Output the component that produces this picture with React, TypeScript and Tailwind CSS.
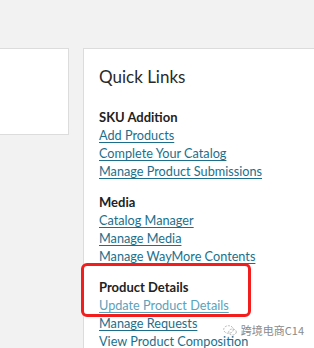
import React from 'react';

const sections = [
  {
    title: 'SKU Addition',
    links: ['Add Products', 'Complete Your Catalog', 'Manage Product Submissions'],
  },
  {
    title: 'Media',
    links: ['Catalog Manager', 'Manage Media', 'Manage WayMore Contents'],
  },
  {
    title: 'Product Details',
    links: ['Update Product Details', 'Manage Requests', 'View Product Composition'],
    highlight: true,
  },
];

function Watermark() {
  return (
    <div className="absolute right-[10px] bottom-[12px] flex items-center gap-[4px] text-[11px] leading-none text-[#8a8a8a]">
      <svg width="14" height="11" viewBox="0 0 14 11" fill="none" stroke="#b5b5b5" strokeWidth="1">
        <ellipse cx="5.5" cy="4.5" rx="4.8" ry="3.8" strokeDasharray="2 1.2" />
        <ellipse cx="9.5" cy="7" rx="3.8" ry="3" strokeDasharray="2 1.2" />
      </svg>
      <span style={{ fontFamily: '"Noto Sans CJK SC", sans-serif' }}>跨境电商C14</span>
    </div>
  );
}

export default function App() {
  return (
    <div
      className="relative w-[314px] h-[348px] overflow-hidden bg-[#f2f2f2] flex items-start gap-[14px] pt-[48px]"
      style={{ fontFamily: 'Lato, "Liberation Sans", sans-serif' }}
    >
      <div className="w-[69px] h-[87px] shrink-0 bg-white border border-l-0 border-[#dcdcdc]" />
      <div className="w-[260px] shrink-0 h-[320px] bg-white border border-r-0 border-[#dcdcdc] pl-[15px] pt-[16px]">
        <h2 className="text-[17px] leading-[24px] text-[#2a2a2a] font-normal">Quick Links</h2>
        <div className="mt-[19px] flex flex-col gap-[13px]">
          {sections.map(s => (
            <div key={s.title} className="relative">
              {s.highlight && (
                <span className="absolute left-[-18px] top-[-15px] w-[170px] h-[54px] border-[3px] border-[#f21d1d] rounded-[6px]" />
              )}
              <h3 className="text-[13px] leading-[18px] font-bold text-[#222]">{s.title}</h3>
              {s.links.map((l, i) => (
                <a
                  key={l}
                  href="#"
                  className={
                    'block w-fit text-[12.7px] leading-[18px] underline underline-offset-[2px] ' +
                    (s.highlight && i === 0 ? 'text-[#5ba2bb]' : 'text-[#1c6f8c]')
                  }
                >
                  {l}
                </a>
              ))}
            </div>
          ))}
        </div>
      </div>
      <Watermark />
    </div>
  );
}
